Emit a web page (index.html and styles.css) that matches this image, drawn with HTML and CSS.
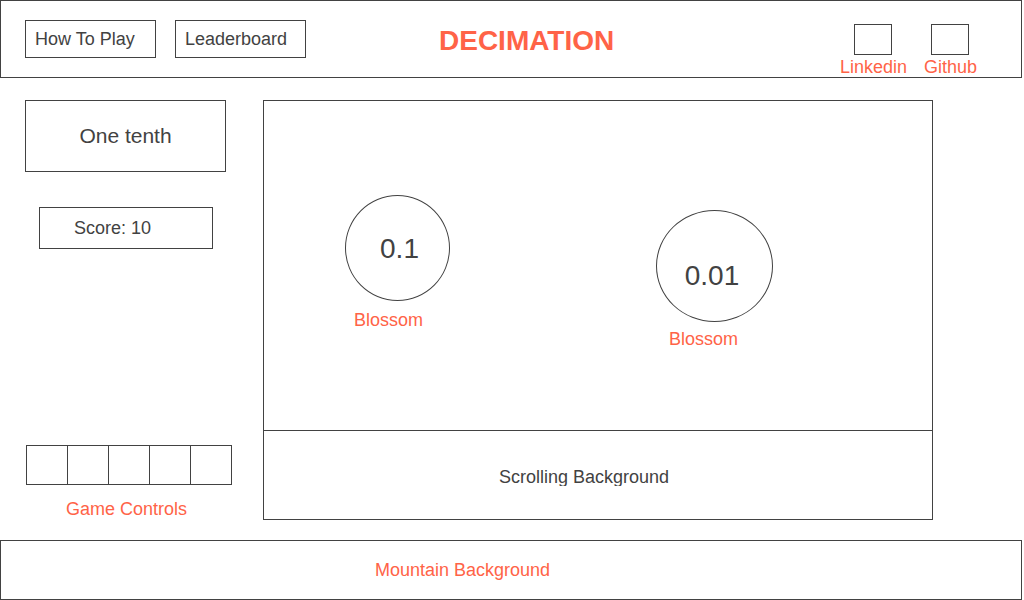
FILE: index.html
```html
<!DOCTYPE html>
<html lang="en">
<head>
<meta charset="utf-8">
<title>Decimation</title>
<link rel="stylesheet" href="styles.css">
</head>
<body>
<header class="topbar">
  <nav class="menu">
    <button class="menu-button" type="button">How To Play</button>
    <button class="menu-button" type="button">Leaderboard</button>
  </nav>
  <h1 class="title">DECIMATION</h1>
  <div class="socials">
    <a class="social" href="#linkedin"><span class="social-box"></span>Linkedin</a>
    <a class="social" href="#github"><span class="social-box"></span>Github</a>
  </div>
</header>
<main class="game">
  <aside class="sidebar">
    <div class="prompt">One tenth</div>
    <div class="score">Score: 10</div>
    <div class="controls">
      <div class="keys">
        <button class="key" type="button" aria-labelledby="controls-label"></button>
        <button class="key" type="button" aria-labelledby="controls-label"></button>
        <button class="key" type="button" aria-labelledby="controls-label"></button>
        <button class="key" type="button" aria-labelledby="controls-label"></button>
        <button class="key" type="button" aria-labelledby="controls-label"></button>
      </div>
      <p class="controls-label" id="controls-label">Game Controls</p>
    </div>
  </aside>
  <section class="board">
    <div class="sky">
      <div class="blossom blossom-tenth">
        <button class="bubble" type="button">0.1</button>
        <p class="blossom-label">Blossom</p>
      </div>
      <div class="blossom blossom-hundredth">
        <button class="bubble" type="button">0.01</button>
        <p class="blossom-label">Blossom</p>
      </div>
    </div>
    <div class="ground"><p class="ground-label">Scrolling Background</p></div>
  </section>
</main>
<footer class="mountains">Mountain Background</footer>
</body>
</html>
```

FILE: styles.css
```css
:root {
  --ink: #424242;
  --accent: #ff6347;
  --line: 1px solid var(--ink);
}

* { box-sizing: border-box; }

body {
  display: flex;
  flex-direction: column;
  min-height: 100vh;
  margin: 0;
  padding-right: 2px;
  background: #fff;
  color: var(--ink);
  font: 18px/20px "Liberation Sans", Arial, sans-serif;
}

h1, p { margin: 0; }

button {
  margin: 0;
  padding: 0;
  border: var(--line);
  border-radius: 0;
  background: none;
  color: inherit;
  font: inherit;
}

.topbar {
  display: flex;
  align-items: flex-start;
  min-height: 78px;
  padding: 0 44px 0 24px;
  border: var(--line);
}

.menu {
  display: flex;
  align-self: center;
  gap: 19px;
}

.menu-button {
  width: 131px;
  height: 38px;
  padding-left: 9px;
  text-align: left;
}

.title {
  margin: 24px 0 0 133px;
  color: var(--accent);
  font-size: 28px;
  line-height: 32px;
}

.socials {
  display: flex;
  gap: 17px;
  margin: 23px 0 0 auto;
}

.social {
  display: flex;
  flex-direction: column;
  align-items: center;
  gap: 2px;
  color: var(--accent);
  text-decoration: none;
}

.social-box {
  width: 38px;
  height: 31px;
  border: var(--line);
}

.game {
  display: flex;
  flex: 1;
  gap: 31px;
  padding: 22px 89px 20px 25px;
}

.sidebar {
  display: flex;
  flex-direction: column;
  width: 207px;
}

.prompt {
  width: 201px;
  padding: 23px 0;
  border: var(--line);
  font-size: 21px;
  line-height: 24px;
  text-align: center;
}

.score {
  width: 174px;
  margin: 35px 0 0 14px;
  padding: 10px 34px;
  border: var(--line);
}

.controls {
  margin-top: auto;
  padding-left: 1px;
}

.keys {
  display: flex;
  height: 40px;
  border: var(--line);
}

.key {
  flex: 1;
  border-width: 0 0 0 1px;
}

.key:first-child { border-left: 0; }

.controls-label {
  padding: 14px 0 1px 40px;
  color: var(--accent);
}

.board {
  display: flex;
  flex: 1;
  flex-direction: column;
  border: var(--line);
}

.sky {
  position: relative;
  flex: 1;
  min-height: 329px;
}

.blossom { position: absolute; }

.blossom-tenth {
  top: 94px;
  left: 81px;
}

.blossom-hundredth {
  top: 109px;
  left: 392px;
}

.bubble {
  display: block;
  border-radius: 50%;
  font-size: 28px;
  line-height: 32px;
}

.blossom-tenth .bubble {
  width: 105px;
  height: 106px;
  padding: 2px 0 0 4px;
}

.blossom-hundredth .bubble {
  width: 117px;
  height: 112px;
  padding: 20px 5px 0 0;
}

.blossom-label {
  padding: 9px 0 0 9px;
  color: var(--accent);
}

.blossom-hundredth .blossom-label { padding: 7px 0 0 13px; }

.ground {
  padding: 36px 0 33px 235px;
  border-top: var(--line);
}

.ground-label {
  height: 19px;
  overflow: hidden;
}

.mountains {
  padding: 19px 0 19px 374px;
  border: var(--line);
  color: var(--accent);
}
```
